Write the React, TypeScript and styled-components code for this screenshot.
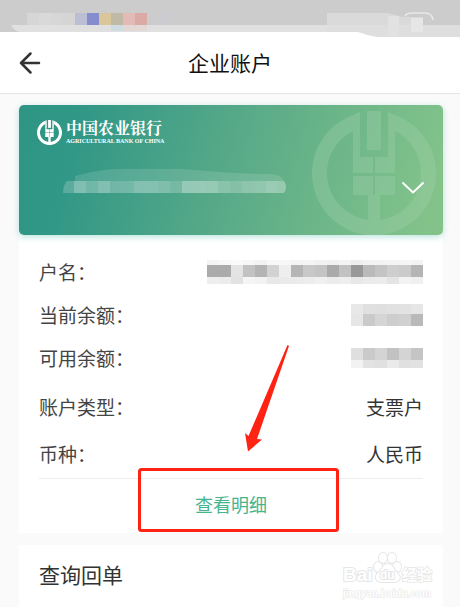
import React from "react";
import styled, { createGlobalStyle } from "styled-components";

const GlobalStyle = createGlobalStyle`
  * { box-sizing: border-box; }
  html { background: #fafafa; overflow: hidden; }
  body {
    margin: 0;
    font-family: "Noto Sans CJK SC", sans-serif;
    color: #333;
  }
`;

const Page = styled.div`
  min-height: 100vh;
  overflow: hidden;
  background: #fafafa;
`;

const StatusBar = styled.div`
  position: relative;
  z-index: 1;
  height: 32px;
  background: #ccc;
`;

const StatusArt = styled.svg`
  display: block;
  width: 100%;
  height: 32px;
  overflow: visible;
`;

const Header = styled.header`
  display: grid;
  grid-template-columns: 60px 1fr 60px;
  align-items: center;
  height: 62px;
  background: #fff;
  border-bottom: 1px solid #e4e4e4;
`;

const IconButton = styled.button`
  display: flex;
  padding: 0;
  border: 0;
  background: none;
  color: inherit;
  cursor: pointer;
`;

const BackButton = styled(IconButton)`
  margin-left: 18px;
`;

const ChevronButton = styled(IconButton)`
  align-self: flex-end;
`;

const Title = styled.h1`
  margin: 0;
  padding-bottom: 2px;
  text-align: center;
  font-size: 21px;
  line-height: 30px;
  font-weight: 400;
  color: #111;
`;

const Content = styled.main`
  display: flex;
  flex-direction: column;
  padding: 11px 17px 0 19px;
`;

const BankCard = styled.section`
  position: relative;
  z-index: 1;
  height: 130px;
  padding: 13px 18px;
  border-radius: 5px;
  background: linear-gradient(105deg, #2e9484 0%, #319786 14%, #5aab88 52%, #83c38a 96%);
  box-shadow: 0 2px 6px rgba(80, 190, 170, 0.4);
`;

const CardEmblem = styled.svg`
  position: absolute;
  right: 7px;
  bottom: 0;
  color: #a2d2ac;
  opacity: 0.34;
`;

const Brand = styled.div`
  position: relative;
  display: flex;
  align-items: center;
  gap: 4px;
  height: 28px;
  color: #fff;
`;

const BrandNames = styled.div`
  display: flex;
  flex-direction: column;
  gap: 2px;
`;

const BrandName = styled.span`
  font-family: "Noto Serif CJK SC", "Noto Sans CJK SC", serif;
  font-size: 16px;
  line-height: 16px;
  font-weight: 700;
`;

const BrandLatin = styled.span`
  font-family: "Liberation Serif", serif;
  font-size: 6px;
  line-height: 6px;
  font-weight: 700;
  white-space: nowrap;
`;

const AccountRow = styled.div`
  position: relative;
  display: flex;
  justify-content: space-between;
  align-items: center;
  height: 28px;
  margin: 21px 0 0 26px;
`;

const Panel = styled.section`
  position: relative;
  padding: 0 20px;
  background: #fff;
`;

const Details = styled.dl`
  margin: 0;
  padding: 15px 0 4px;
  border-bottom: 1px solid #eee;
`;

const Row = styled.div<{ $height: number }>`
  display: flex;
  justify-content: space-between;
  align-items: center;
  height: ${(p) => p.$height}px;
  font-size: 19px;
  line-height: 28px;
  white-space: nowrap;
`;

const Label = styled.dt`
  color: #444;
`;

const Value = styled.dd`
  display: flex;
  margin: 0;
  color: #333;
`;

const DetailButton = styled.button`
  display: block;
  width: 100%;
  height: 54px;
  padding: 0 0 4px;
  border: 0;
  background: none;
  font-family: inherit;
  font-size: 18px;
  line-height: 26px;
  color: #47b48c;
  cursor: pointer;
`;

const Callout = styled.svg`
  position: absolute;
  bottom: 0;
  left: 50%;
  margin-left: -93px;
  pointer-events: none;
`;

const ReceiptPanel = styled(Panel)`
  height: 80px;
  margin-top: 12px;
  padding-top: 14px;
`;

const PanelTitle = styled.h2`
  margin: 0;
  font-size: 21px;
  line-height: 30px;
  font-weight: 400;
`;

const Watermark = styled.svg`
  position: absolute;
  right: 8px;
  top: 4px;
`;

function Emblem() {
  return (
    <g fill="currentColor">
      <path d="M41 4A62 62 0 1 0 83 4V20A47 47 0 1 1 41 20Z" />
      <path d="M41 4L48 1V42H41ZM76 1L83 4V42H76Z" />
      <path d="M55 0H69V39H55Z" />
      <path d="M41 42H48V46H76V42H83V62H63V46H61V62H41ZM41 65H61V84H41ZM63 65H83V84H63Z" />
      <path d="M56 84H68V110H56Z" />
    </g>
  );
}

type Band = { y: number; h: number; cells: string[] };

function Mosaic({ bands, label }: { bands: Band[]; label: string }) {
  const width = bands[0].cells.length * 12;
  const height = bands.reduce((sum, b) => sum + b.h, 0);
  return (
    <svg width={width} height={height} role="img" aria-label={label} shapeRendering="crispEdges">
      {bands.map((b) =>
        b.cells.map((c, i) => (
          <rect key={`${b.y}-${i}`} x={i * 12} y={b.y} width="12" height={b.h} fill={c} />
        ))
      )}
    </svg>
  );
}

const split = (s: string) => s.split(" ").map((c) => `#${c}${c}${c}`);

const nameBands: Band[] = [
  { y: 0, h: 5, cells: split("f4 f8 fa f6 f2 f8 f7 f4 f5 f2 f0 f4 ee f2 f3 f4 f5 f3") },
  { y: 5, h: 12, cells: split("ab ab e4 c2 b4 d2 ee b5 c8 c4 aa c2 99 ba c4 ce cb b5") },
  { y: 17, h: 7, cells: split("ee ec e2 f5 f2 e8 ea eb ed f0 ec ee e8 eb ec e4 f3 f0") },
];
const balanceBands: Band[] = [
  { y: 0, h: 10, cells: split("e8 e0 df e1 e2 e6") },
  { y: 10, h: 12, cells: split("e6 ca d5 cd d0 b9") },
];
const availableBands: Band[] = [
  { y: 0, h: 12, cells: split("df ca d4 c2 d4 c5") },
  { y: 12, h: 8, cells: split("f2 e2 e0 ea e0 e2") },
];

const statusCells: [number, string][] = [
  [27, "#d6d6d6"], [39, "#d9d9d9"], [51, "#d7d7d7"], [63, "#d5d5d5"],
  [75, "#bcbed3"], [87, "#858dce"], [99, "#d9c69a"], [111, "#c0b9a5"],
  [123, "#e2bbb6"], [135, "#dbaaa5"], [159, "#cbcbd0"],
];

const accountCells = [0.2, 0.37, 0.29, 0.36, 0.27, 0.27, 0.34, 0.34, 0.3, 0.24, 0.4, 0.4, 0.39, 0.3, 0.26, 0.3, 0.31, 0.36, 0.33];

export default function App() {
  return (
    <Page>
      <GlobalStyle />
      <StatusBar>
        <StatusArt viewBox="0 0 460 32" preserveAspectRatio="none" aria-hidden="true">
          <path d="M11 25H460V32H20Q14 31 11 25Z" fill="#e0e0e0" />
          {statusCells.map(([x, fill]) => (
            <rect key={x} x={x} y="13" width="12" height="12" fill={fill} />
          ))}
          <rect x="111" y="25" width="12" height="6" fill="#cfdde2" />
          <rect x="123" y="25" width="24" height="6" fill="#e3d8d6" />
          <path d="M327 13H388L403 17H423V25H327Z" fill="#dadada" />
          <path d="M358 32H460V37H377Q366 35 358 32Z" fill="#dedede" />
          <path d="M405 16Q407 13 412 13H425Q432 13 433 20" fill="none" stroke="#e8e8e8" strokeWidth="1.500" />
          <path d="M327 25H460V32H327Z" fill="#dedede" />
          <path d="M388 16H399V36H388Z" fill="#e2e2e2" />
          <path d="M411 18H423V32H411Z" fill="#e6e6e6" />
        </StatusArt>
      </StatusBar>
      <Header>
        <BackButton type="button" aria-label="返回">
          <svg width="24" height="24" viewBox="0 0 24 24" fill="none" stroke="#333" strokeWidth="2.500" strokeLinecap="round" strokeLinejoin="round">
            <path d="M21 12H3M12.500 2.500L3 12L12.500 21.500" />
          </svg>
        </BackButton>
        <Title>企业账户</Title>
      </Header>
      <Content>
        <BankCard>
          <CardEmblem width="124" height="124" viewBox="0 0 124 124" aria-hidden="true">
            <Emblem />
          </CardEmblem>
          <Brand>
            <svg width="25" height="25" viewBox="0 0 124 124" aria-hidden="true">
              <Emblem />
            </svg>
            <BrandNames>
              <BrandName>中国农业银行</BrandName>
              <BrandLatin>AGRICULTURAL BANK OF CHINA</BrandLatin>
            </BrandNames>
          </Brand>
          <AccountRow>
            <svg width="223" height="24" viewBox="0 0 223 24" role="img" aria-label="账号">
              <path d="M12 12V7Q30 2 50 0H118Q145 2 172 4Q190 5 208 5Q219 6 221 12Z" fill="#fff" fillOpacity="0.13" />
              <clipPath id="account-shape">
                <path d="M4 12H221Q225 18 221 24H0Q0 16 4 12Z" />
              </clipPath>
              <g clipPath="url(#account-shape)" shapeRendering="crispEdges">
                {accountCells.map((o, i) => (
                  <rect key={i} x={i * 12 - 1} y="12" width="12" height="12" fill="#fff" fillOpacity={o} />
                ))}
              </g>
            </svg>
            <ChevronButton type="button" aria-label="切换账户">
              <svg width="24" height="14" viewBox="0 0 24 14" fill="none" stroke="#fff" strokeWidth="2" strokeLinecap="round" strokeLinejoin="round">
                <path d="M2 2L12 11.500L22 2" />
              </svg>
            </ChevronButton>
          </AccountRow>
        </BankCard>
        <Panel>
          <Details>
            <Row $height={44}>
              <Label>户名：</Label>
              <Value><Mosaic bands={nameBands} label="已隐藏" /></Value>
            </Row>
            <Row $height={42}>
              <Label>当前余额：</Label>
              <Value><Mosaic bands={balanceBands} label="已隐藏" /></Value>
            </Row>
            <Row $height={44}>
              <Label>可用余额：</Label>
              <Value><Mosaic bands={availableBands} label="已隐藏" /></Value>
            </Row>
            <Row $height={54}>
              <Label>账户类型：</Label>
              <Value>支票户</Value>
            </Row>
            <Row $height={40}>
              <Label>币种：</Label>
              <Value>人民币</Value>
            </Row>
          </Details>
          <DetailButton type="button">查看明细</DetailButton>
          <Callout width="202" height="190" viewBox="0 0 202 190" aria-hidden="true">
            <rect x="1.500" y="126.500" width="198" height="61" rx="2" fill="none" stroke="#ff2314" strokeWidth="3" />
            <path d="M149.500 2L151 3L119 96L124 96.500L110 108.500L107 90L110.500 93Z" fill="#ff2314" />
          </Callout>
        </Panel>
        <ReceiptPanel>
          <PanelTitle>查询回单</PanelTitle>
          <Watermark width="94" height="54" viewBox="0 0 94 54" aria-hidden="true">
            <g fill="#fff" stroke="#e6e6e6" strokeWidth="2" paintOrder="stroke" fontFamily="Liberation Sans, sans-serif" fontWeight="700">
              <text x="2" y="32" fontSize="19">Bai</text>
              <ellipse cx="37" cy="18" rx="4" ry="5" />
              <ellipse cx="42" cy="9" rx="4" ry="5" />
              <ellipse cx="51" cy="9" rx="4" ry="5" />
              <ellipse cx="56" cy="18" rx="4" ry="5" />
              <path d="M47 15C42 15 41 21 36 25C33 29 36 33 41 33H53C58 33 61 29 57 25C53 21 52 15 47 15Z" />
              <text x="39" y="30" fontSize="12">du</text>
              <text x="61" y="31" fontSize="15" strokeWidth="1.500" fontFamily="Noto Sans CJK SC, sans-serif">经验</text>
              <text x="2" y="48" fontSize="10" strokeWidth="1">jingyan.baidu.com</text>
            </g>
          </Watermark>
        </ReceiptPanel>
      </Content>
    </Page>
  );
}
